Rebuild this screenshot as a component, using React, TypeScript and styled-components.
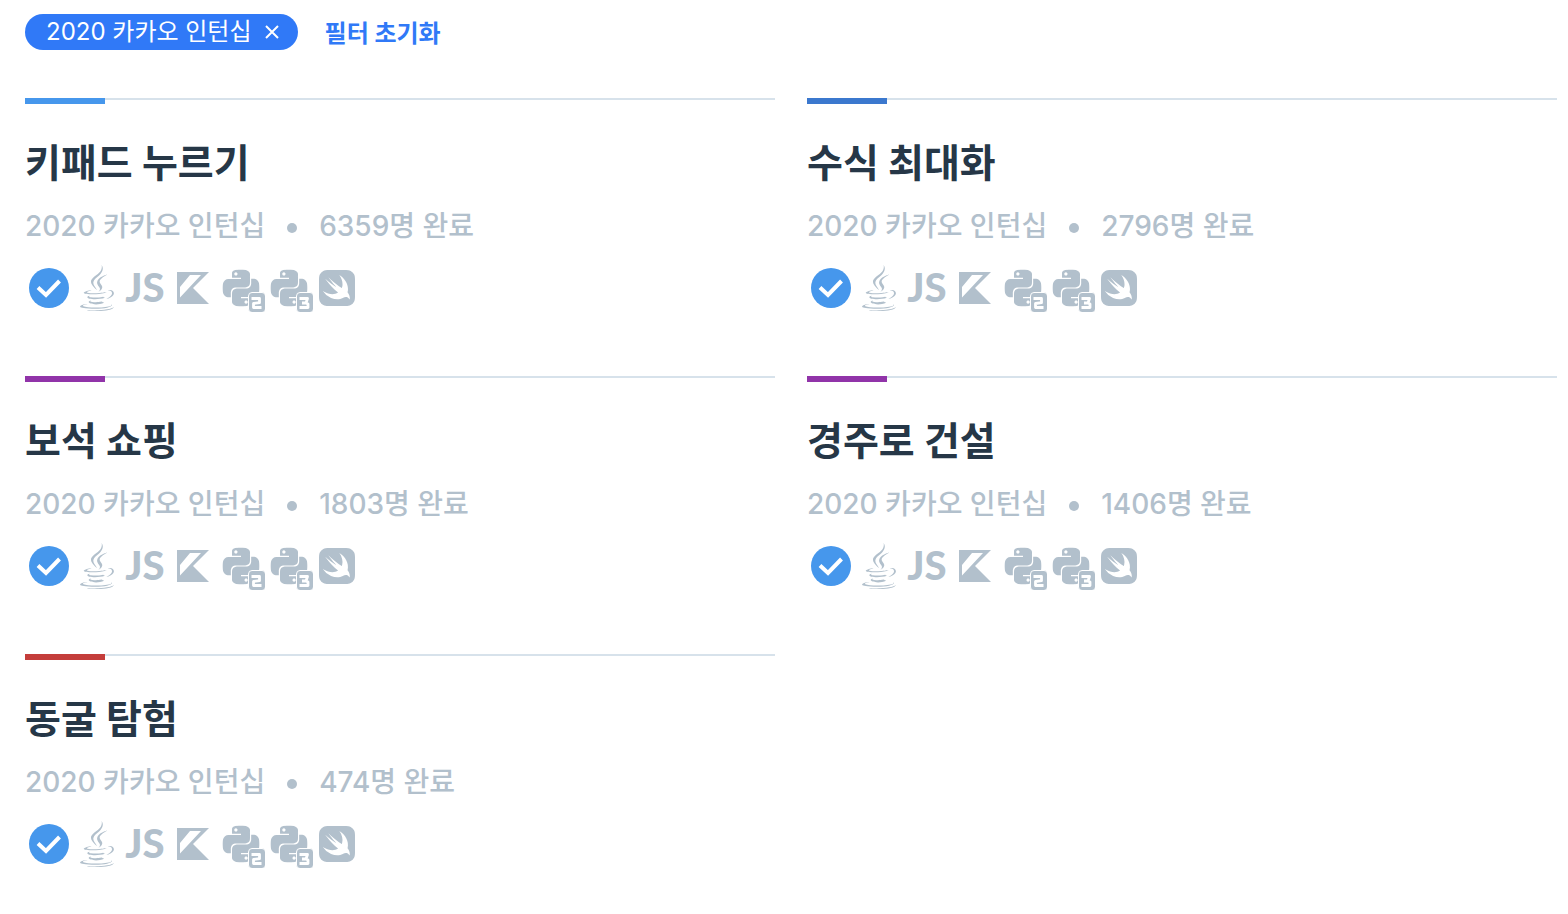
import React from "react";
import styled, { createGlobalStyle } from "styled-components";
import { FaJava } from "react-icons/fa";
import { SiPython, SiSwift } from "react-icons/si";

const GlobalStyle = createGlobalStyle`
  * { box-sizing: border-box; }
  body {
    margin: 0;
    background: #ffffff;
    color: #263747;
    font-family: Inter, "Noto Sans CJK KR", sans-serif;
  }
`;

const Page = styled.main`
  padding: 14px 11px 36px 25px;
`;

const Filters = styled.div`
  display: flex;
  align-items: center;
  gap: 27px;
  height: 36px;
  margin-bottom: 48px;
`;

const Tag = styled.span`
  display: flex;
  align-items: center;
  height: 36px;
  padding: 0 18px 0 21px;
  gap: 12px;
  border-radius: 18px;
  background: #3079f7;
  color: #ffffff;
  font-size: 24px;
  line-height: 36px;
  white-space: nowrap;
`;

const RemoveButton = styled.button`
  display: flex;
  padding: 0;
  border: 0;
  background: none;
  color: inherit;
  cursor: pointer;
`;

const ResetButton = styled.button`
  padding: 3px 0 0;
  border: 0;
  background: none;
  color: #3079f7;
  font: inherit;
  font-size: 24px;
  font-weight: 700;
  line-height: 36px;
  cursor: pointer;
`;

const Grid = styled.div`
  display: grid;
  grid-template-columns: repeat(2, minmax(0, 1fr));
  column-gap: 32px;
  row-gap: 64px;
`;

const Card = styled.article`
  border-top: 2px solid #d7e2eb;
`;

const LevelBar = styled.div<{ $color: string }>`
  width: 80px;
  height: 6px;
  margin-top: -2px;
  background: ${(p) => p.$color};
`;

const Title = styled.h2`
  margin: 29px 0 0;
  font-size: 39px;
  font-weight: 700;
  line-height: 60px;
`;

const Meta = styled.p`
  display: flex;
  align-items: center;
  gap: 22px;
  margin: 13px 0 0;
  color: #b2c0cc;
  font-size: 28px;
  font-weight: 500;
  line-height: 40px;
`;

const Dot = styled.span`
  width: 10px;
  height: 10px;
  margin-top: 4px;
  border-radius: 50%;
  background: currentColor;
`;

const Languages = styled.ul`
  display: flex;
  margin: 18px 0 0;
  padding: 0;
  list-style: none;
  color: #b2c0cc;
`;

const Language = styled.li`
  display: flex;
  align-items: center;
  justify-content: center;
  width: 48px;
  height: 48px;
`;

const IconText = styled.text`
  font-family: Lato, sans-serif;
  font-weight: 900;
`;

const CheckIcon = () => (
  <svg width="48" height="48" viewBox="0 0 48 48" role="img" aria-label="완료">
    <circle cx="24" cy="24" r="20" fill="#4697ec" />
    <path d="M13 23.500 21 31 34.500 17" fill="none" stroke="#ffffff" strokeWidth="4" />
  </svg>
);

const JsIcon = () => (
  <svg width="48" height="48" viewBox="0 0 48 48" role="img" aria-label="JavaScript">
    <IconText x="24" y="38" textAnchor="middle" fontSize="40" fill="currentColor">
      JS
    </IconText>
  </svg>
);

const KotlinIcon = () => (
  <svg width="48" height="48" viewBox="0 0 48 48" role="img" aria-label="Kotlin">
    <path
      d="M8 8H40L24 24 40 40H8ZM11 23V33.500L32 11H21Z"
      fill="currentColor"
      fillRule="evenodd"
    />
  </svg>
);

const PythonIcon = ({ version }: { version: 2 | 3 }) => (
  <svg width="48" height="48" viewBox="0 0 48 48" role="img" aria-label={`Python ${version}`}>
    <SiPython x="5.500" y="5.500" size={37} />
    <rect x="31.500" y="28.500" width="17" height="20" rx="3.500" fill="currentColor" stroke="#ffffff" strokeWidth="1" />
    <path
      d={
        version === 2
          ? "M34.500 34.500H42.500V38.700L36.500 39.500V43.500H44.500"
          : "M34.500 34.500H42.500L41 39 43 40V43.500H34.500M37 39H42"
      }
      fill="none"
      stroke="#ffffff"
      strokeWidth="2.800"
      strokeLinejoin="round"
    />
  </svg>
);

type Problem = { title: string; solved: number; color: string };

const problems: Problem[] = [
  { title: "키패드 누르기", solved: 6359, color: "#4697ec" },
  { title: "수식 최대화", solved: 2796, color: "#3b78ce" },
  { title: "보석 쇼핑", solved: 1803, color: "#9134a9" },
  { title: "경주로 건설", solved: 1406, color: "#9134a9" },
  { title: "동굴 탐험", solved: 474, color: "#c43d3b" },
];

const ProblemCard = ({ title, solved, color }: Problem) => (
  <Card>
    <LevelBar $color={color} />
    <Title>{title}</Title>
    <Meta>
      <span>2020 카카오 인턴십</span>
      <Dot />
      <span>{solved}명 완료</span>
    </Meta>
    <Languages>
      <Language><CheckIcon /></Language>
      <Language><FaJava size={46} aria-label="Java" /></Language>
      <Language><JsIcon /></Language>
      <Language><KotlinIcon /></Language>
      <Language><PythonIcon version={2} /></Language>
      <Language><PythonIcon version={3} /></Language>
      <Language><SiSwift size={36} aria-label="Swift" /></Language>
    </Languages>
  </Card>
);

export default function App() {
  return (
    <>
      <GlobalStyle />
      <Page>
        <Filters>
          <Tag>
            2020 카카오 인턴십
            <RemoveButton type="button" aria-label="필터 삭제">
              <svg width="16" height="16" viewBox="0 0 16 16">
                <path d="M2 2 14 14M14 2 2 14" stroke="currentColor" strokeWidth="2" />
              </svg>
            </RemoveButton>
          </Tag>
          <ResetButton type="button">필터 초기화</ResetButton>
        </Filters>
        <Grid>
          {problems.map((problem) => (
            <ProblemCard key={problem.title} {...problem} />
          ))}
        </Grid>
      </Page>
    </>
  );
}
